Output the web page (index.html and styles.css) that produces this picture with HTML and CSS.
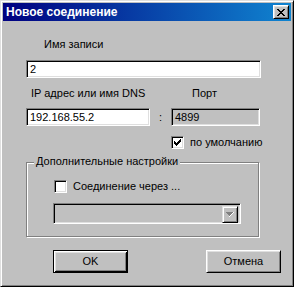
FILE: index.html
```html
<!DOCTYPE html>
<html lang="ru">
<head>
<meta charset="utf-8">
<title>Новое соединение</title>
<link rel="stylesheet" href="styles.css">
</head>
<body>
<div class="window">
  <div class="titlebar">
    <span class="title">Новое соединение</span>
    <span class="close">
      <svg width="8" height="7" viewBox="0 0 8 7" shape-rendering="crispEdges">
        <path d="M0 0h2v1h-2zM6 0h2v1h-2zM1 1h2v1h-2zM5 1h2v1h-2zM2 2h4v1h-4zM3 3h2v1h-2zM2 4h4v1h-4zM1 5h2v1h-2zM5 5h2v1h-2zM0 6h2v1h-2zM6 6h2v1h-2z" fill="#000"/>
      </svg>
    </span>
  </div>
  <div class="body">
    <div class="name-label">Имя записи</div>
    <div class="field name-field">2</div>
    <div class="label-row">
      <span class="ip-label">IP адрес или имя DNS</span>
      <span class="port-label">Порт</span>
    </div>
    <div class="input-row">
      <div class="field ip-field">192.168.55.2</div>
      <span class="colon">:</span>
      <div class="field port-field">4899</div>
    </div>
    <div class="default-row">
      <span class="check">
        <svg width="7" height="7" viewBox="0 0 7 7" shape-rendering="crispEdges">
          <path d="M6 0h1v3h-1zM5 1h1v3h-1zM4 2h1v3h-1zM3 3h1v3h-1zM2 4h1v3h-1zM1 3h1v3h-1zM0 2h1v3h-1z" fill="#000"/>
        </svg>
      </span>
      <span class="check-label">по умолчанию</span>
    </div>
    <div class="group">
      <span class="legend">Дополнительные настройки</span>
      <div class="via-row">
        <span class="check"></span>
        <span class="check-label">Соединение через ...</span>
      </div>
      <div class="combo">
        <span class="combo-btn">
          <svg width="8" height="5" viewBox="0 0 8 5" shape-rendering="crispEdges">
            <path d="M0 0h7v1h-7zM1 1h5v1h-5zM2 2h3v1h-3zM3 3h1v1h-1z" fill="#808080"/>
            <path d="M7 0h1v1h-1zM6 1h1v1h-1zM5 2h1v1h-1zM4 3h1v1h-1zM3 4h1v1h-1z" fill="#fff"/>
          </svg>
        </span>
      </div>
    </div>
    <div class="button-row">
      <button class="btn btn-default"><span>OK</span></button>
      <button class="btn"><span>Отмена</span></button>
    </div>
  </div>
</div>
</body>
</html>
```

FILE: styles.css
```css
html, body {
  margin: 0;
  padding: 0;
  background: #c0c0c0;
}

.window {
  width: 294px;
  height: 287px;
  box-sizing: border-box;
  background: #c0c0c0;
  border: 1px solid;
  border-color: #dfdfdf #000 #000 #dfdfdf;
  box-shadow: inset 1px 1px 0 #fff, inset -1px -1px 0 #808080;
  padding: 2px;
  font-family: "Liberation Sans", Arial, sans-serif;
  font-size: 11px;
  line-height: 13px;
  color: #000;
}

.titlebar {
  height: 18px;
  background: linear-gradient(to right, #000080, #1084d0);
  display: flex;
  align-items: center;
  justify-content: space-between;
  padding: 0 2px 0 3px;
}

.title {
  color: #fff;
  font-weight: bold;
  font-size: 12px;
  line-height: 14px;
}

.close {
  width: 16px;
  height: 14px;
  box-sizing: border-box;
  background: #c0c0c0;
  border: 1px solid;
  border-color: #fff #000 #000 #fff;
  box-shadow: inset 1px 1px 0 #dfdfdf, inset -1px -1px 0 #808080;
  display: flex;
  align-items: center;
  justify-content: center;
  padding-right: 1px;
}

.close svg, .check svg, .combo-btn svg {
  display: block;
}

.body {
  padding-left: 23px;
}

.name-label {
  margin: 17px 0 0 18px;
}

.field {
  height: 18px;
  box-sizing: border-box;
  background: #fff;
  border: 1px solid;
  border-color: #808080 #fff #fff #808080;
  box-shadow: inset 1px 1px 0 #000, inset -1px -1px 0 #dfdfdf;
  padding: 2px 3px 0;
  white-space: nowrap;
}

.name-field {
  margin-top: 9px;
  width: 235px;
}

.label-row {
  display: flex;
  margin-top: 9px;
  height: 13px;
}

.ip-label {
  margin-left: 5px;
  width: 161px;
}

.input-row {
  display: flex;
  align-items: flex-start;
  margin-top: 8px;
}

.ip-field {
  width: 124px;
}

.colon {
  width: 21px;
  padding-top: 3px;
  text-align: center;
}

.port-field {
  width: 89px;
  background: #c0c0c0;
}

.default-row {
  display: flex;
  align-items: center;
  margin: 10px 0 0 145px;
  height: 13px;
}

.check {
  width: 13px;
  height: 13px;
  box-sizing: border-box;
  background: #fff;
  border: 1px solid;
  border-color: #808080 #fff #fff #808080;
  box-shadow: inset 1px 1px 0 #000, inset -1px -1px 0 #dfdfdf;
  display: flex;
  align-items: center;
  justify-content: center;
  flex: none;
}

.check-label {
  margin-left: 6px;
}

.group {
  margin-top: 13px;
  width: 233px;
  height: 75px;
  box-sizing: border-box;
  border: 1px solid #808080;
  box-shadow: 1px 1px 0 #fff, inset 1px 1px 0 #fff;
  padding-left: 26px;
}

.legend {
  display: inline-block;
  margin: -8px 0 0 -19px;
  padding: 0 2px;
  background: #c0c0c0;
  vertical-align: top;
}

.via-row {
  display: flex;
  align-items: center;
  margin: 4px 0 0 1px;
  height: 13px;
}

.combo {
  margin-top: 10px;
  width: 188px;
  height: 21px;
  box-sizing: border-box;
  background: #c0c0c0;
  border: 1px solid;
  border-color: #808080 #fff #fff #808080;
  box-shadow: inset 1px 1px 0 #000, inset -1px -1px 0 #dfdfdf;
  display: flex;
  justify-content: flex-end;
  padding: 2px;
}

.combo-btn {
  width: 16px;
  height: 17px;
  box-sizing: border-box;
  background: #c0c0c0;
  border: 1px solid;
  border-color: #dfdfdf #000 #000 #dfdfdf;
  box-shadow: inset 1px 1px 0 #fff, inset -1px -1px 0 #808080;
  display: flex;
  align-items: center;
  justify-content: center;
}

.button-row {
  display: flex;
  margin: 13px 0 0 27px;
  gap: 78px;
}

.btn {
  width: 75px;
  height: 23px;
  box-sizing: border-box;
  margin: 0;
  padding: 0;
  font: inherit;
  color: #000;
  background: #c0c0c0;
  border: 1px solid;
  border-color: #fff #000 #000 #fff;
  box-shadow: inset 1px 1px 0 #dfdfdf, inset -1px -1px 0 #808080;
}

.btn-default {
  border: 1px solid #000;
  box-shadow: inset 1px 1px 0 #fff, inset -1px -1px 0 #000, inset 2px 2px 0 #dfdfdf, inset -2px -2px 0 #808080;
}
```
